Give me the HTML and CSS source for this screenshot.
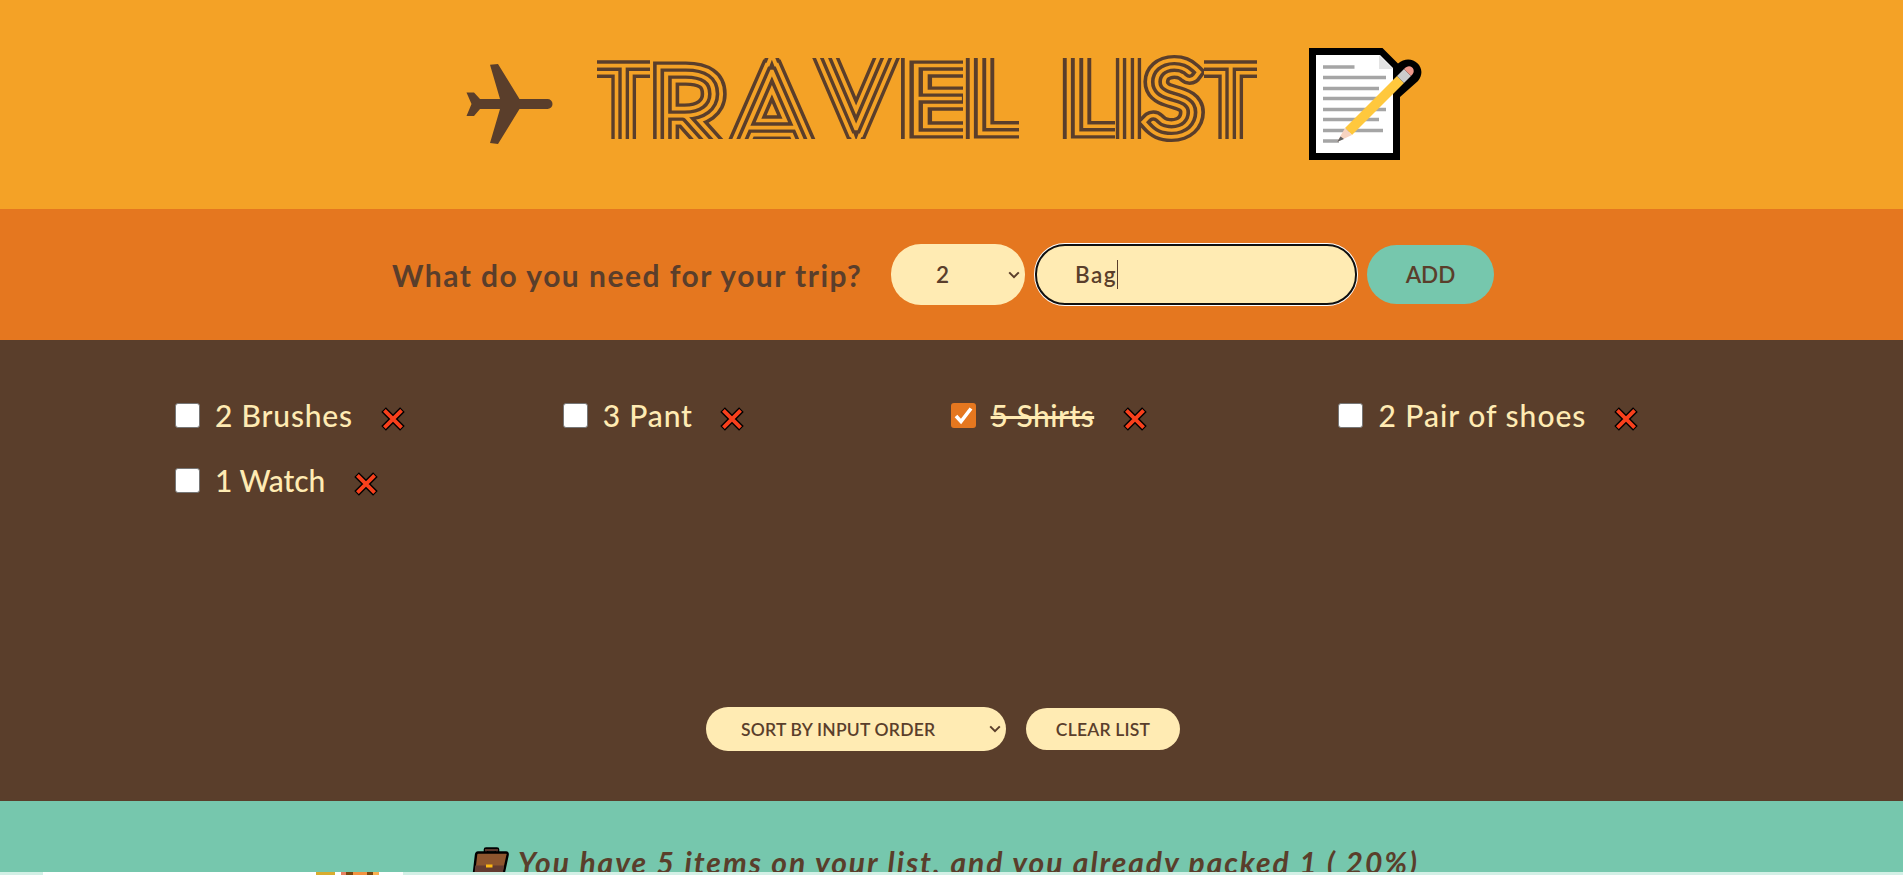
FILE: index.html
```html
<!DOCTYPE html>
<html lang="en">
<head>
<meta charset="utf-8">
<title>Travel List</title>
<link rel="stylesheet" href="styles.css">
</head>
<body>
<svg class="defs" width="0" height="0">
  <symbol id="cross" viewBox="0 0 24 24"><path d="M2.600 2.600 21.400 21.400M21.400 2.600 2.600 21.400" stroke="#000" stroke-width="6.600"/><path d="M3.400 3.400 20.600 20.600M20.600 3.400 3.400 20.600" stroke="#f8401c" stroke-width="3.800"/></symbol>
  <symbol id="chevron" viewBox="0 0 12 8"><path d="M1.200 1.400 6 6.200 10.800 1.400" fill="none" stroke="#5a3e2b" stroke-width="2"/></symbol>
</svg>
<div class="app">
  <header class="header">
    <svg class="plane" viewBox="0 0 87 80"><path d="M24 .8 32 0 53.500 35H81.500a5 5 0 0 1 0 10H53.500L32 80 24 79 34 45H14L8 52H.5L5.500 40 .5 28.500H8L14 35H34Z"/></svg>
    <svg class="title" viewBox="597 50 661 100" role="img" aria-label="Travel List">
      <svg x="597" y="58" width="53" height="81" viewBox="597 58 53 81"><g class="s1"><text id="g1" transform="translate(623.500 151.500)" font-size="125">T</text></g><use href="#g1" class="s2"/><use href="#g1" class="s3"/><use href="#g1" class="s4"/></svg>
      <svg x="652" y="58" width="77" height="81" viewBox="652 58 77 81"><g class="s1"><text id="g2" transform="translate(688 155.500) scale(1.060 1)" font-size="119">R</text></g><use href="#g2" class="s2"/><use href="#g2" class="s3"/><use href="#g2" class="s4"/></svg>
      <svg x="724" y="58" width="96" height="81" viewBox="724 58 96 81"><g class="s1"><text id="g3" transform="translate(772 158) scale(1.040 1)" font-size="125">A</text></g><use href="#g3" class="s2"/><use href="#g3" class="s3"/><use href="#g3" class="s4"/></svg>
      <svg x="808" y="58" width="93" height="81" viewBox="808 58 93 81"><g class="s1"><text id="g4" transform="translate(856 129) scale(1.020 1)" font-size="125">V</text></g><use href="#g4" class="s2"/><use href="#g4" class="s3"/><use href="#g4" class="s4"/></svg>
      <svg x="901" y="58" width="62" height="81" viewBox="901 58 62 81"><g class="s1"><text id="g5" transform="translate(938 134) scale(1.300 1)" font-size="99">E</text></g><use href="#g5" class="s2"/><use href="#g5" class="s3"/><use href="#g5" class="s4"/></svg>
      <svg x="965" y="58" width="54" height="81" viewBox="965 58 54 81"><g class="s1"><text id="g6" transform="translate(998.500 134) scale(1.150 1)" font-size="125">L</text></g><use href="#g6" class="s2"/><use href="#g6" class="s3"/><use href="#g6" class="s4"/></svg>
      <svg x="1062" y="58" width="53" height="81" viewBox="1062 58 53 81"><g class="s1"><text id="g7" transform="translate(1095.500 134) scale(1.150 1)" font-size="125">L</text></g><use href="#g7" class="s2"/><use href="#g7" class="s3"/><use href="#g7" class="s4"/></svg>
      <svg x="1115" y="58" width="27" height="81" viewBox="1115 58 27 81"><g class="s1"><text id="g8" transform="translate(1128.500 160)" font-size="170">I</text></g><use href="#g8" class="s2"/><use href="#g8" class="s3"/><use href="#g8" class="s4"/></svg>
      <svg x="1141" y="50" width="64" height="100" viewBox="1141 50 64 100"><g class="s1"><text id="g9" transform="translate(1173 130) scale(1.080 1)" font-size="90">S</text></g><use href="#g9" class="s2"/><use href="#g9" class="s3"/><use href="#g9" class="s4"/></svg>
      <svg x="1204" y="58" width="53" height="81" viewBox="1204 58 53 81"><g class="s1"><text id="g10" transform="translate(1230.500 151.500)" font-size="125">T</text></g><use href="#g10" class="s2"/><use href="#g10" class="s3"/><use href="#g10" class="s4"/></svg>
    </svg>
    <svg class="memo" viewBox="0 0 113 113">
      <path d="M0 0H73.500L89 15.500C102 4 120 19 109 33L91 49V112H0Z"/>
      <path d="M7 7H71L84 20V105H7Z" fill="#fff"/><path d="M70 7 84 21H70Z" fill="#e3e3e3"/>
      <path d="M14 19H45.500M14 29.500H77M14 40.500H70M14 50.500H73M14 61.500H77M14 71.500H70M14 82.500H74M14 93H30" stroke="#a5a5a5" stroke-width="3.500"/>
      <path d="M88 28 95 35 43 87 36 80Z" fill="#ffc83d"/><path d="M28 94 36 80 43 87Z" fill="#f7d4c1"/><path d="M28 94 31.500 88.500 35 91Z" fill="#636363"/>
      <path d="M88 28 95 21 102 28 95 35Z" fill="#ccc"/><path d="M95 21C101 14 109 22 102 28Z" fill="#f09a8c"/>
    </svg>
  </header>
  <form class="add-form">
    <h3>What do you need for your trip?</h3>
    <div class="field qty"><span>2</span><svg class="chev"><use href="#chevron"/></svg></div>
    <div class="field name"><span>Bag</span><i class="caret"></i></div>
    <div class="field add"><span>ADD</span></div>
  </form>
  <main class="list">
    <ul>
      <li><i class="box"></i><span class="w1">2 Brushes</span><svg class="del"><use href="#cross"/></svg></li>
      <li><i class="box"></i><span class="w2">3 Pant</span><svg class="del"><use href="#cross"/></svg></li>
      <li><svg class="box checked" viewBox="0 0 25 25"><path d="M5 13 10 18.500 20 5.500" fill="none" stroke="#fff" stroke-width="3.600"/></svg><span class="w3 done">5 Shirts</span><svg class="del"><use href="#cross"/></svg></li>
      <li><i class="box"></i><span class="w4">2 Pair of shoes</span><svg class="del"><use href="#cross"/></svg></li>
      <li><i class="box"></i><span class="w5">1 Watch</span><svg class="del"><use href="#cross"/></svg></li>
    </ul>
    <div class="actions">
      <div class="sort"><span>SORT BY INPUT ORDER</span><svg class="chev"><use href="#chevron"/></svg></div>
      <div class="clear"><span>CLEAR LIST</span></div>
    </div>
  </main>
  <footer class="stats">
    <svg class="case" viewBox="0 0 38 36"><path d="M14 8V2.500H25V8" fill="none" stroke="#000" stroke-width="4.600" stroke-linejoin="round"/><path d="M14 8V3H25V8" fill="none" stroke="#5d382c" stroke-width="2"/><path d="M6 5.500H34Q36 5.500 35.600 8L30 34H1L4 8Q4.300 5.500 6 5.500Z" fill="#8e562e" stroke="#000" stroke-width="2.400"/><path d="M3.200 18.500H32L29.500 34H2Z" fill="#633b30"/><path d="M14 17.500H20.500V20.500H14Z" fill="#fdb813"/></svg>
    <em>You have 5 items on your list, and you already packed 1 ( 20%)</em>
  </footer>
  <div class="peek"><div class="panel"><i class="thumb gold"></i><i class="thumb orange"></i></div></div>
</div>
</body>
</html>
```
FILE: styles.css
```css
* { box-sizing: border-box; margin: 0; padding: 0; }
body { font-family: Lato, "Open Sans", sans-serif; color: #5a3e2b; height: 875px; overflow: hidden; }
.defs { position: absolute; }
.app { height: 875px; overflow: hidden; position: relative; display: grid; grid-template-rows: 209px 131px 461px 74px; }
.header { background: #f4a226; display: flex; align-items: flex-start; padding-left: 466px; }
.plane { width: 87px; height: 80px; margin-top: 64px; fill: #5a3e2b; flex: none; }
.title { width: 661px; height: 100px; margin: 50px 51px 0 44px; flex: none; }
.title text { font-family: Lato, Inter, sans-serif; font-weight: 100; text-anchor: middle; stroke-linejoin: miter; }
.s1 { stroke: #5a3e2b; fill: #5a3e2b; stroke-width: 23.200; }
.s2 { stroke: #f4a226; fill: #f4a226; stroke-width: 16.400; }
.s3 { stroke: #5a3e2b; fill: #5a3e2b; stroke-width: 9.200; }
.s4 { stroke: #f4a226; fill: #f4a226; stroke-width: 2.400; }
.memo { width: 113px; height: 113px; margin-top: 48px; flex: none; }
.add-form { background: #e5771f; display: flex; align-items: center; padding-left: 392px; font-weight: 600; }
.add-form h3 { width: 499px; font-size: 30px; font-weight: 700; letter-spacing: 1.480px; white-space: nowrap; }
.field { background: #ffebb3; height: 61px; border-radius: 30px; font-size: 22.500px; display: flex; align-items: center; flex: none; }
.qty { width: 134px; padding: 0 5px 0 45px; justify-content: space-between; }
.name { width: 322px; height: 61px; margin-left: 10px; padding-left: 38px; border: 2px solid #101010; box-shadow: 0 0 0 1px #fff; letter-spacing: 1.500px; }
.caret { width: 1px; height: 29px; background: #5a3e2b; }
.add { width: 127px; height: 59px; margin-left: 10px; background: #76c7ad; justify-content: center; }
.chev { width: 12px; height: 8px; flex: none; }
.list { background: #5a3e2b; color: #ffebb3; padding: 55px 0 50px 175px; display: flex; flex-direction: column; justify-content: space-between; }
.list ul { list-style: none; display: grid; grid-template-columns: repeat(4, 387.800px); grid-auto-rows: 40px; row-gap: 25px; }
.list li { display: flex; align-items: center; font-size: 30px; font-weight: 500; white-space: nowrap; }
.box { width: 25px; height: 25px; background: #fff; border: 1px solid #767676; border-radius: 3px; margin-right: 15px; flex: none; }
.checked { background: #e5771f; border: 0; }
.list li span { margin-right: 26px; letter-spacing: .8px; line-height: 38px; padding-bottom: 1px; }
.w1 { width: 140px; } .w2 { width: 91px; } .w3 { width: 106px; } .w4 { width: 210px; } .w5 { width: 113px; }
.list li .w4 { letter-spacing: 1px; }
.list li .w5 { letter-spacing: -.1px; }
.list li .w3 { letter-spacing: .450px; }
.done { text-decoration: line-through; text-decoration-thickness: 3px; }
.del { width: 24px; height: 24px; margin-top: 7px; }
.actions { display: flex; align-items: center; gap: 20px; color: #5a3e2b; font-size: 17.500px; font-weight: 600; letter-spacing: .200px; padding-left: 531px; }
.sort, .clear { background: #ffebb3; border-radius: 22px; display: flex; align-items: center; white-space: nowrap; }
.sort { width: 300px; height: 44px; padding: 0 5px 0 35px; justify-content: space-between; }
.clear { width: 154px; height: 42px; justify-content: center; }
.stats { background: #76c7ad; display: flex; align-items: flex-start; padding: 46px 0 0 472px; font-size: 30px; font-weight: 700; white-space: nowrap; overflow: hidden; }
.case { width: 38px; height: 36px; margin-right: 8px; flex: none; }
.stats em { letter-spacing: 1.950px; line-height: 30px; }
.peek { position: absolute; left: 0; right: 0; bottom: 0; height: 3px; background: #d3f0e6; padding-left: 43px; }
.panel { width: 360px; height: 3px; background: #fff; display: flex; padding-left: 273px; gap: 6px; }
.thumb { height: 3px; }
.gold { width: 19px; background: #d8ac2f; }
.orange { width: 38px; background: linear-gradient(90deg, #e88260 0 5px, #7a4710 5px 12px, #f29340 12px 26px, #7a4710 26px 32px, #fab050 32px); }
```
